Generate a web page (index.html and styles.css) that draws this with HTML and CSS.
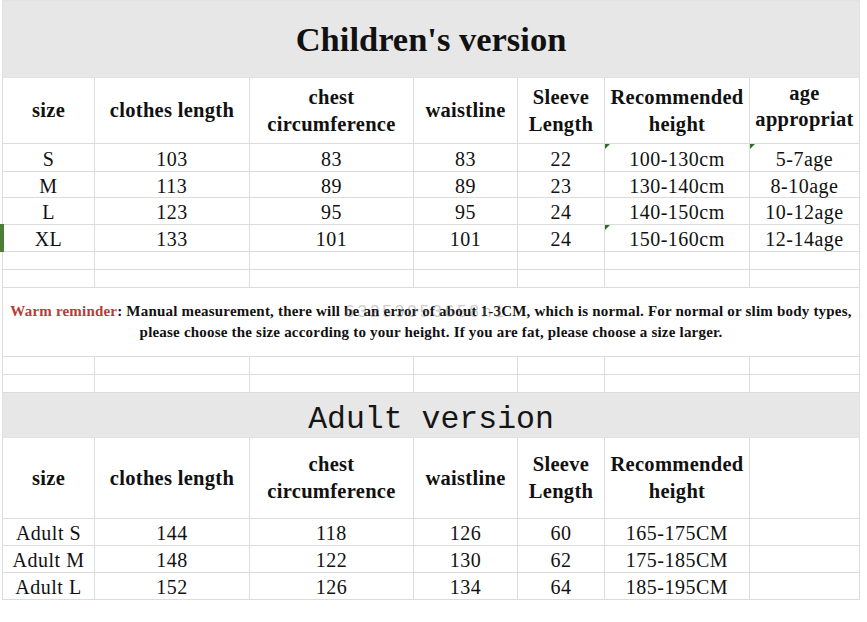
FILE: index.html
```html
<!DOCTYPE html>
<html lang="en">
<head>
<meta charset="utf-8">
<title>Size chart</title>
<link rel="stylesheet" href="styles.css">
</head>
<body>
<table class="sheet">
  <colgroup>
    <col class="w1"><col class="w2"><col class="w3"><col class="w4"><col class="w5"><col class="w6"><col class="w7">
  </colgroup>
  <tr class="title-row">
    <td colspan="7" class="title">Children's version</td>
  </tr>
  <tr class="head-row">
    <th>size</th>
    <th>clothes length</th>
    <th>chest<br>circumference</th>
    <th>waistline</th>
    <th>Sleeve<br>Length</th>
    <th>Recommended<br>height</th>
    <th class="age-head">age<br>appropriat</th>
  </tr>
  <tr class="data-row first">
    <td>S</td><td>103</td><td>83</td><td>83</td><td>22</td><td class="flag">100-130cm</td><td class="flag">5-7age</td>
  </tr>
  <tr class="data-row short">
    <td>M</td><td>113</td><td>89</td><td>89</td><td>23</td><td>130-140cm</td><td>8-10age</td>
  </tr>
  <tr class="data-row">
    <td>L</td><td>123</td><td>95</td><td>95</td><td>24</td><td>140-150cm</td><td>10-12age</td>
  </tr>
  <tr class="data-row">
    <td class="sel">XL</td><td>133</td><td>101</td><td>101</td><td>24</td><td class="flag">150-160cm</td><td>12-14age</td>
  </tr>
  <tr class="blank-row"><td></td><td></td><td></td><td></td><td></td><td></td><td></td></tr>
  <tr class="blank-row"><td></td><td></td><td></td><td></td><td></td><td></td><td></td></tr>
  <tr class="note-row">
    <td colspan="7" class="note"><span class="warm">Warm reminder</span>: Manual measurement, there will be an error of about 1-3CM, which is normal. For normal or slim body types,<br>please choose the size according to your height. If you are fat, please choose a size larger.<span class="mark">63253053658n1</span></td>
  </tr>
  <tr class="blank-row"><td></td><td></td><td></td><td></td><td></td><td></td><td></td></tr>
  <tr class="blank-row"><td></td><td></td><td></td><td></td><td></td><td></td><td></td></tr>
  <tr class="title-row adult">
    <td colspan="7" class="title mono">Adult version</td>
  </tr>
  <tr class="head-row tall">
    <th>size</th>
    <th>clothes length</th>
    <th>chest<br>circumference</th>
    <th>waistline</th>
    <th>Sleeve<br>Length</th>
    <th>Recommended<br>height</th>
    <th></th>
  </tr>
  <tr class="data-row">
    <td>Adult S</td><td>144</td><td>118</td><td>126</td><td>60</td><td>165-175CM</td><td></td>
  </tr>
  <tr class="data-row">
    <td>Adult M</td><td>148</td><td>122</td><td>130</td><td>62</td><td>175-185CM</td><td></td>
  </tr>
  <tr class="data-row">
    <td>Adult L</td><td>152</td><td>126</td><td>134</td><td>64</td><td>185-195CM</td><td></td>
  </tr>
</table>
</body>
</html>
```

FILE: styles.css
```css
html, body {
  margin: 0;
  padding: 0;
  background: #ffffff;
}

body {
  font-family: "Liberation Serif", "Times New Roman", serif;
  color: #111111;
}

.sheet {
  border-collapse: collapse;
  table-layout: fixed;
  width: 857px;
  margin: 0 0 0 2px;
}

.w1 { width: 92px; }
.w2 { width: 155px; }
.w3 { width: 164px; }
.w4 { width: 104px; }
.w5 { width: 87px; }
.w6 { width: 145px; }
.w7 { width: 110px; }

.sheet td,
.sheet th {
  border: 1px solid #dcdcdc;
  padding: 0;
  text-align: center;
  vertical-align: middle;
}

.title-row td {
  background: #e7e7e7;
  border-color: #e2e2e2;
}

.title-row {
  height: 77px;
}

.title {
  font-weight: bold;
  font-size: 34.5px;
  line-height: 1;
  padding-top: 10px;
}

.title-row.adult {
  height: 45px;
}

.title.mono {
  font-family: "Liberation Mono", "Courier New", monospace;
  font-weight: normal;
  font-size: 31.5px;
  padding-top: 10px;
  color: #151515;
}

.head-row {
  height: 66px;
}

.head-row.tall {
  height: 81px;
}

.head-row th {
  font-weight: bold;
  font-size: 20.5px;
  letter-spacing: 0.3px;
  line-height: 27px;
  color: #111111;
}

.head-row th.age-head {
  line-height: 26px;
  padding-bottom: 10px;
}

.data-row {
  height: 27px;
}

.data-row.first {
  height: 28px;
}

.data-row.short {
  height: 26px;
}

.data-row td {
  font-size: 20px;
  letter-spacing: 0.5px;
  line-height: 20px;
  padding-top: 2px;
}

.blank-row {
  height: 18px;
}

.note-row {
  height: 69px;
}

.note {
  position: relative;
  font-weight: bold;
  font-size: 15px;
  letter-spacing: 0.2px;
  line-height: 21px;
  padding: 0 2px 4px;
  white-space: nowrap;
}

.warm {
  color: #b83a3a;
}

.mark {
  position: absolute;
  left: 342px;
  top: 13px;
  font-family: "Liberation Sans", Arial, sans-serif;
  font-weight: normal;
  font-size: 17px;
  letter-spacing: 3px;
  color: rgba(120, 120, 120, 0.4);
  white-space: nowrap;
}

.flag {
  position: relative;
}

.flag::before {
  content: "";
  position: absolute;
  left: 0;
  top: 0;
  border-top: 5px solid #2f6e2b;
  border-right: 5px solid transparent;
}

.sel {
  position: relative;
}

.sel::before {
  content: "";
  position: absolute;
  left: -3px;
  top: -1px;
  bottom: -1px;
  width: 4px;
  background: #4c7e38;
}
```
